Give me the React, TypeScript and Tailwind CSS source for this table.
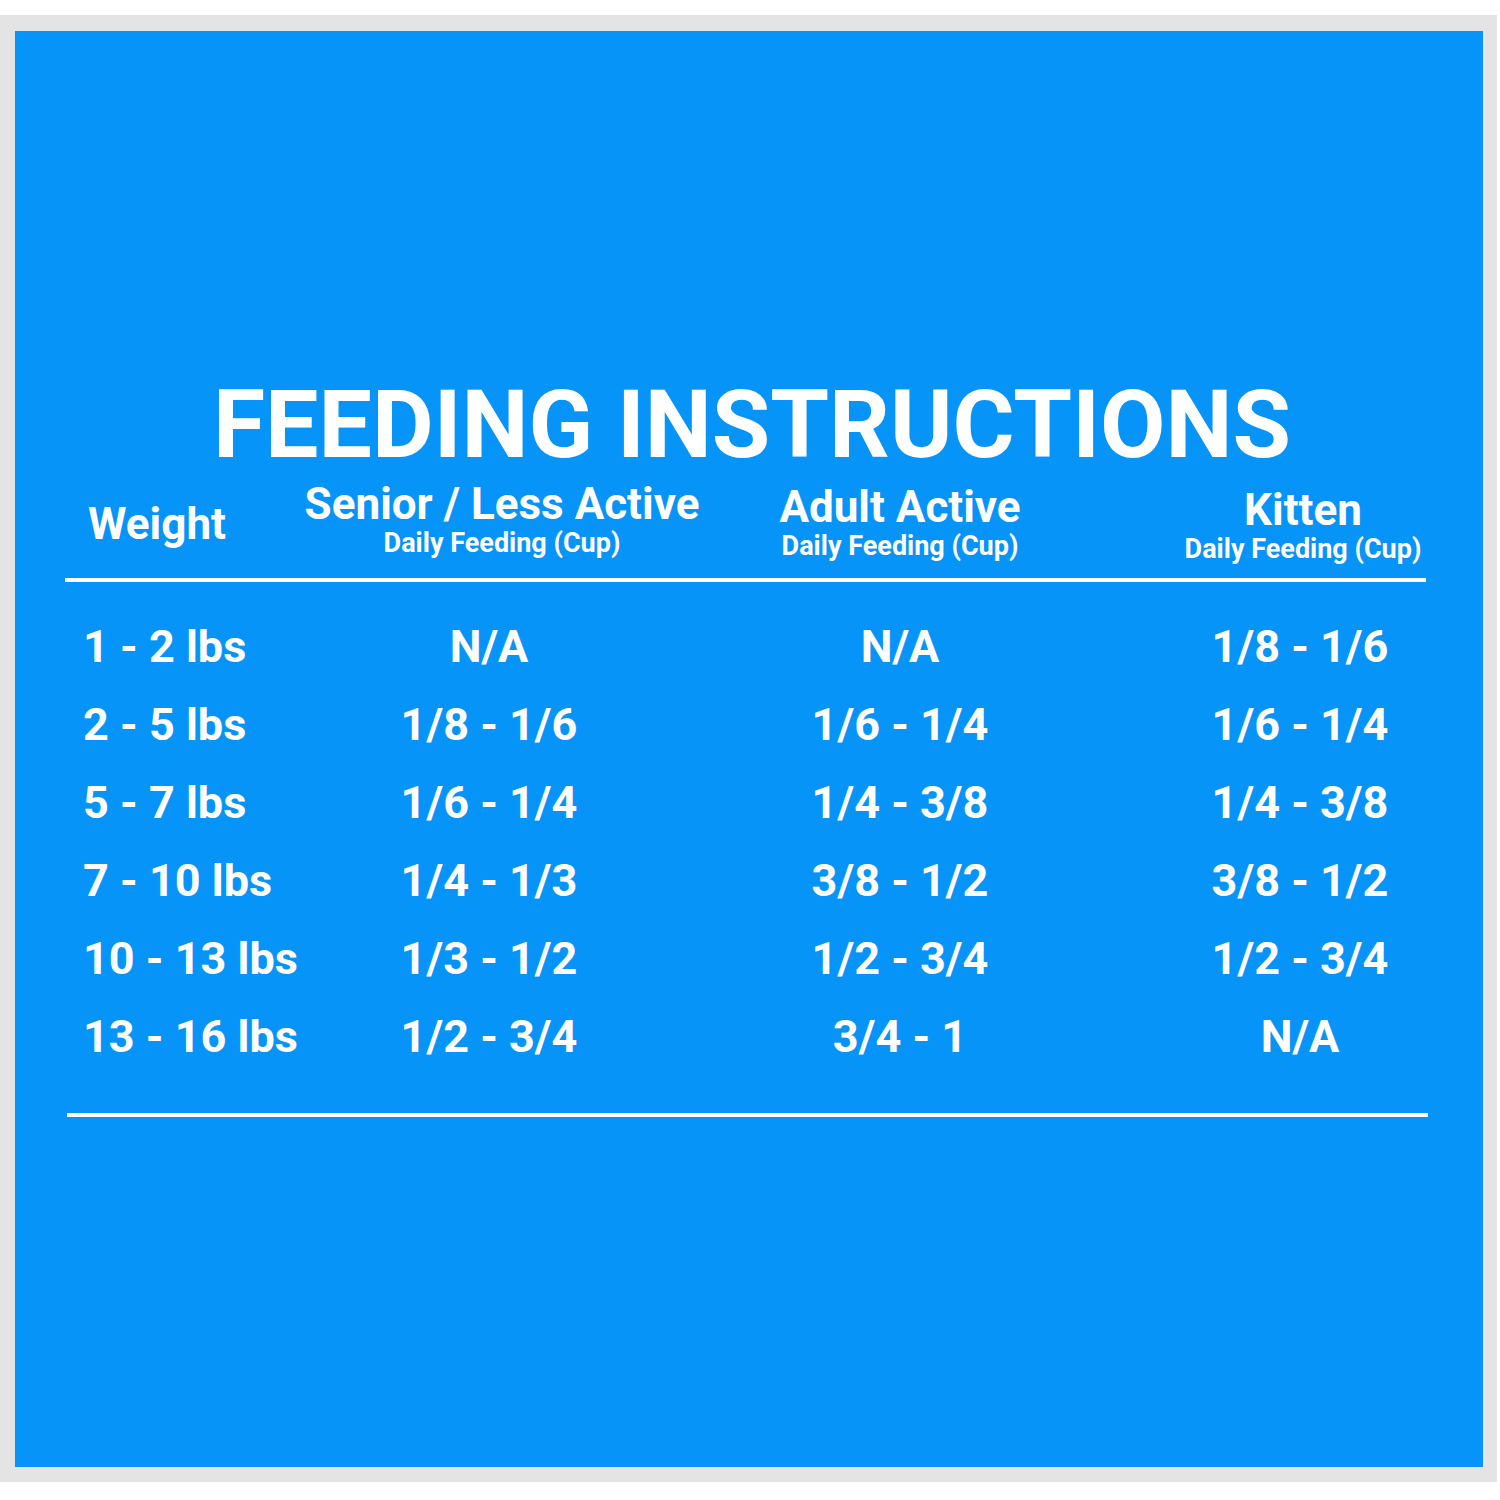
const columns = [
  { title: 'Senior / Less Active', offset: 'pl-[26px] pt-0' },
  { title: 'Adult Active', offset: 'pl-0 pt-[3px]' },
  { title: 'Kitten', offset: 'pl-[6px] pt-[6px]' },
];

const rows = [
  ['1 - 2 lbs', 'N/A', 'N/A', '1/8 - 1/6'],
  ['2 - 5 lbs', '1/8 - 1/6', '1/6 - 1/4', '1/6 - 1/4'],
  ['5 - 7 lbs', '1/6 - 1/4', '1/4 - 3/8', '1/4 - 3/8'],
  ['7 - 10 lbs', '1/4 - 1/3', '3/8 - 1/2', '3/8 - 1/2'],
  ['10 - 13 lbs', '1/3 - 1/2', '1/2 - 3/4', '1/2 - 3/4'],
  ['13 - 16 lbs', '1/2 - 3/4', '3/4 - 1', 'N/A'],
];

const grid = 'grid grid-cols-[280px_388px_434px_1fr]';

export default function App() {
  return (
    <div className="w-[1500px] h-[1500px] bg-white pt-[15px] font-['Roboto',sans-serif] text-white">
      <div className="w-[1497px] h-[1467px] bg-[#e4e4e4] pl-[15px] pt-[16px]">
        <div className="w-[1468px] h-[1436px] bg-[#0794f8] pt-[346px]">
          <h1 className="text-center text-[95px] leading-none font-bold pl-[6px]">
            FEEDING INSTRUCTIONS
          </h1>

          <div className={`${grid} items-start mt-[10px]`}>
            <div className="pl-[73px] pt-[20px] text-[44px] leading-[44px] font-bold">Weight</div>
            {columns.map((col) => (
              <div key={col.title} className={`flex flex-col items-center ${col.offset}`}>
                <span className="text-[44px] leading-[44px] font-bold whitespace-nowrap">{col.title}</span>
                <span className="mt-[4px] text-[27px] leading-[27px] font-bold whitespace-nowrap">
                  Daily Feeding (Cup)
                </span>
              </div>
            ))}
          </div>

          <div className="h-[4px] bg-white ml-[50px] mr-[57px] mt-[15px]" />

          <div className="mt-[26px]">
            {rows.map((row) => (
              <div key={row[0]} className={`${grid} text-[45px] leading-[78px] font-bold`}>
                <div className="pl-[68px] whitespace-nowrap">{row[0]}</div>
                {row.slice(1).map((value, i) => (
                  <div key={i} className="text-center whitespace-nowrap">
                    {value}
                  </div>
                ))}
              </div>
            ))}
          </div>

          <div className="h-[4px] bg-white ml-[52px] mr-[55px] mt-[37px]" />
        </div>
      </div>
    </div>
  );
}
